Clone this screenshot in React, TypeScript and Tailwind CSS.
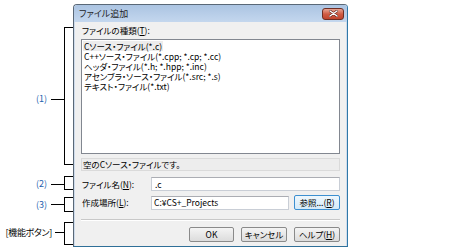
import React from "react";

const FONT = "font-['Noto_Sans_CJK_JP',sans-serif] [font-feature-settings:'palt']";

function Bracket({
  label,
  top,
  height,
  labelClass,
  dash = "w-[13px] ml-[4px]",
  blue = true,
}: {
  label: string;
  top: string;
  height: string;
  labelClass?: string;
  dash?: string;
  blue?: boolean;
}) {
  return (
    <div className={`flex items-center ${top} ${height}`}>
      <div className={`flex flex-1 items-center justify-end ${labelClass ?? ""}`}>
        <span
          className={`whitespace-nowrap text-[9px] leading-[10px] ${
            blue ? "text-[#1f5fae]" : "text-black tracking-[-0.3px]"
          }`}
        >
          {label}
        </span>
        <span className={`h-px shrink-0 bg-black ${dash}`} />
      </div>
      <div className="h-full w-[9px] border-y border-l border-black" />
    </div>
  );
}

function Button({
  children,
  focused = false,
  className = "",
}: {
  children: React.ReactNode;
  focused?: boolean;
  className?: string;
}) {
  return (
    <div
      className={`flex h-[15px] items-center justify-center rounded-[2px] border text-[8.5px] leading-none ${
        focused
          ? "border-[#3c8fd0] bg-gradient-to-b from-[#eef7fd] to-[#d5eaf8]"
          : "border-[#8a8a8a] bg-gradient-to-b from-[#f4f4f4] to-[#dcdcdc]"
      } ${className}`}
    >
      {children}
    </div>
  );
}

const items = [
  "C++ソース・ファイル(*.cpp; *.cp; *.cc)",
  "ヘッダ・ファイル(*.h; *.hpp; *.inc)",
  "アセンブラ・ソース・ファイル(*.src; *.s)",
  "テキスト・ファイル(*.txt)",
];

export default function App() {
  return (
    <div className={`flex h-[250px] w-[474px] bg-white text-black ${FONT}`}>
      {/* annotations */}
      <div className="flex w-[73px] flex-col">
        <Bracket label="(1)" top="mt-[27px]" height="h-[138px]" labelClass="pt-[6px]" />
        <Bracket label="(2)" top="mt-[11px]" height="h-[14px]" labelClass="pt-[2px]" />
        <Bracket label="(3)" top="mt-[7px]" height="h-[15px]" />
        <Bracket
          label="[機能ボタン]"
          top="mt-[10px]"
          height="h-[23px]"
          labelClass="-mt-[2px]"
          dash="w-[9px] ml-[3px]"
          blue={false}
        />
      </div>

      {/* dialog */}
      <div className="mt-[4px] flex h-[243px] w-[275px] flex-col overflow-hidden rounded-t-[4px] border border-[#5a6877] border-r-[#2f78a8] border-b-[#2f6f98]">
        <div className="flex h-[17px] items-center bg-gradient-to-b from-[#abc4e2] to-[#c4d7ee] pl-[5px] pr-[3px]">
          <span className="text-[9px] leading-none text-[#1e1e1e]">ファイル追加</span>
          <div className="ml-auto flex h-[12px] w-[22px] items-center justify-center rounded-[3px] border border-[#6e2e24] bg-gradient-to-b from-[#e7a494] via-[#cf5c45] to-[#c0442d]">
            <svg width="9" height="7" viewBox="0 0 9 7">
              <path
                d="M1 1 L8 6 M8 1 L1 6"
                stroke="#5a2018"
                strokeWidth="2.6"
                strokeLinecap="round"
              />
              <path
                d="M1 1 L8 6 M8 1 L1 6"
                stroke="#ffffff"
                strokeWidth="1.5"
                strokeLinecap="round"
              />
            </svg>
          </div>
        </div>

        <div className="flex flex-1 flex-col border-x border-[#cfdcec] bg-[#f0f0f0] px-[6px]">
          <div className="mt-[3px] h-[10px] pl-[1px] text-[8.5px] leading-[10px]">
            ファイルの種類(<u>T</u>):
          </div>

          <div className="mt-[4px] flex h-[115px] flex-col border border-[#828790] bg-white pl-[1px] pt-[1px] text-[8.5px]">
            <div className="flex h-[10px] items-center">
              <div className="flex h-[10px] items-center bg-[#ececec] px-[1px] leading-[10px]">
                Cソース・ファイル(*.c)
              </div>
            </div>
            {items.map((it) => (
              <div key={it} className="flex h-[10px] items-center px-[1px] leading-[10px]">
                {it}
              </div>
            ))}
          </div>

          <div className="mt-[4px] flex h-[13px] items-center border border-[#dadada] bg-[#ededed] pl-[1px] text-[8.5px] leading-none">
            空のCソース・ファイルです。
          </div>

          <div className="mt-[6px] flex h-[14px] items-center">
            <span className="w-[70px] pl-[1px] text-[8.5px] leading-none">
              ファイル名(<u>N</u>):
            </span>
            <div className="flex h-full flex-1 items-center border border-[#c9ced6] border-t-[#abadb3] bg-white pl-[3px] text-[8.5px] leading-none">
              .c
            </div>
          </div>

          <div className="mt-[4px] flex h-[15px] items-center">
            <span className="w-[70px] pl-[1px] text-[8.5px] leading-none">
              作成場所(<u>L</u>):
            </span>
            <div className="flex h-[14px] w-[138px] items-center border border-[#c9ced6] border-t-[#abadb3] bg-white pl-[2px] text-[8.5px] leading-none">
              C:¥CS+_Projects
            </div>
            <Button focused className="ml-auto w-[46px]">
              参照...(<u>R</u>)
            </Button>
          </div>

          <div className="mt-[9px] h-px bg-[#c8c8c8] shadow-[0_1px_0_#ffffff]" />

          <div className="mt-[7px] flex justify-end gap-[7px]">
            <Button className="w-[45px]">OK</Button>
            <Button className="w-[46px]">キャンセル</Button>
            <Button className="w-[46px]">
              ヘルプ(<u>H</u>)
            </Button>
          </div>
        </div>
      </div>
    </div>
  );
}
